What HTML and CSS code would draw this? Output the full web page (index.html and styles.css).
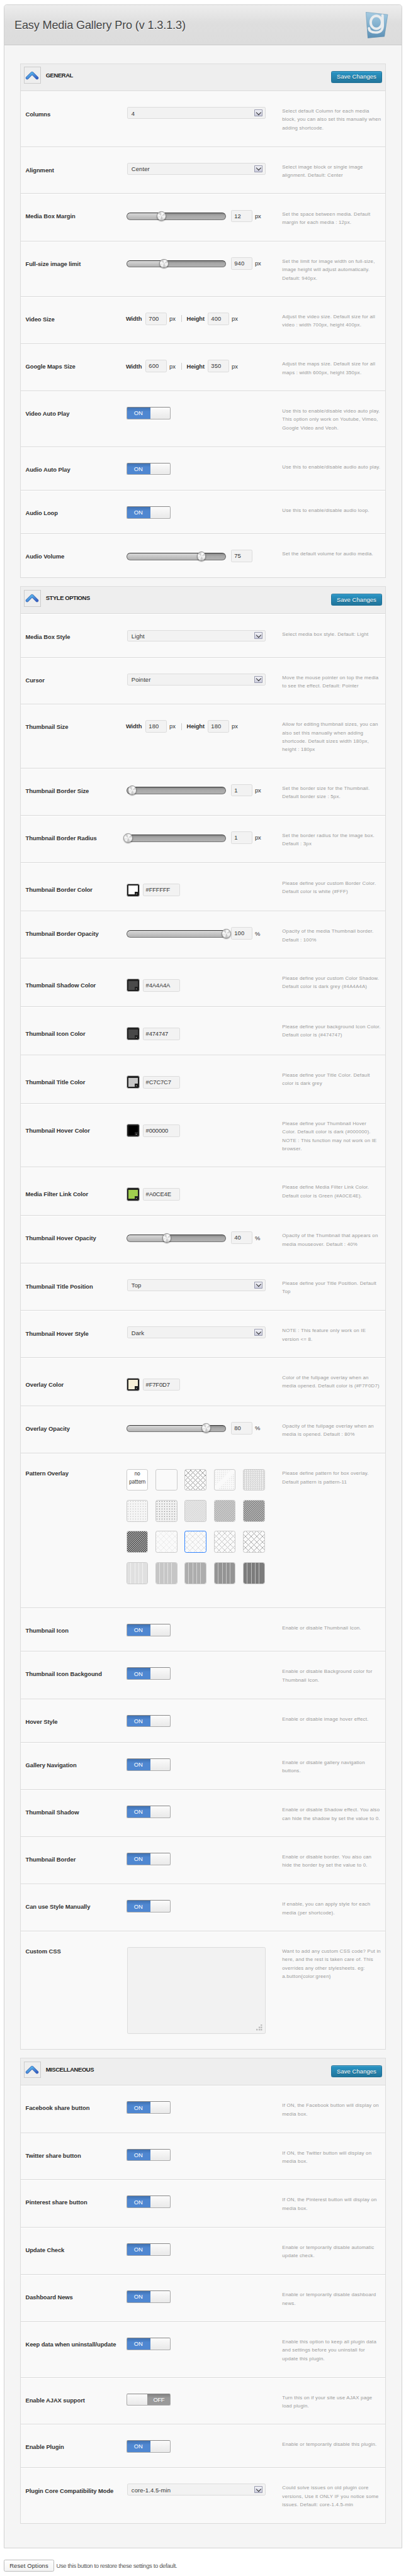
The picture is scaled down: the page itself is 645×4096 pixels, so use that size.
FILE: index.html
```html
<!DOCTYPE html>
<html lang="en">
<head>
<meta charset="utf-8">
<title>Easy Media Gallery Pro</title>
<link rel="stylesheet" href="styles.css">
</head>
<body>
<svg class="defs" aria-hidden="true">
  <defs>
    <linearGradient id="chev" x1="0" y1="0" x2="1" y2="1"><stop offset="0" stop-color="#5fc4f3"/><stop offset="1" stop-color="#3560c4"/></linearGradient>
    <linearGradient id="plate" x1="0" y1="0" x2="0" y2="1"><stop offset="0" stop-color="#a6cbe2"/><stop offset=".45" stop-color="#86b3d0"/><stop offset="1" stop-color="#5b8fb5"/></linearGradient>
    <symbol id="chevron" viewBox="0 0 28 18"><path d="M4 14 L14 4 L24 14" fill="none" stroke="#3a5fae" stroke-width="6" stroke-linecap="round" stroke-linejoin="round"/><path d="M4 14 L14 4 L24 14" fill="none" stroke="url(#chev)" stroke-width="4.4" stroke-linecap="round" stroke-linejoin="round"/></symbol>
  </defs>
</svg>
<div class="page">
  <main class="panel">
    <header class="masthead">
      <h1>Easy Media Gallery Pro (v 1.3.1.3)</h1>
      <svg class="logo" viewBox="0 0 45 53"><path d="M0 0 L45 5 L38 50 L4 53 Z" fill="url(#plate)"/><path d="M.5 .5 L44.5 5.300 L37.600 49.600 L4.500 52.500 Z" fill="none" stroke="#6e93ab" stroke-opacity=".55"/><ellipse cx="21.500" cy="21" rx="11.500" ry="13" fill="none" stroke="#e9ecee" stroke-width="5"/><path d="M34 7 L34.500 27 C34.500 38 29 41.500 20 41.500 C11 41.500 7 38 6.500 33" fill="none" stroke="#e9ecee" stroke-width="5" stroke-linecap="round"/></svg>
    </header>
    <div class="sections">

    <section class="group">
      <header class="bar"><span class="fold"><svg><use href="#chevron"/></svg></span><h2>GENERAL</h2><button class="save">Save Changes</button></header>
      <div class="row h113 sel"><h3>Columns</h3><div class="ctl"><span class="select">4<i></i></span></div><p>Select default Column for each media<br>block, you can also set this manually when<br>adding shortcode.</p></div>
      <div class="row h95 sel"><h3>Alignment</h3><div class="ctl"><span class="select">Center<i></i></span></div><p>Select image block or single image<br>alignment. Default: Center</p></div>
      <div class="row h96"><h3>Media Box Margin</h3><div class="ctl"><span class="slider" style="--v:70px"><b></b></span><span class="num">12</span><span class="unit">px</span></div><p>Set the space between media. Default<br>margin for each media : 12px.</p></div>
      <div class="row h112"><h3>Full-size image limit</h3><div class="ctl"><span class="slider" style="--v:75px"><b></b></span><span class="num">940</span><span class="unit">px</span></div><p>Set the limit for image width on full-size,<br>image height will adjust automatically.<br>Default: 940px.</p></div>
      <div class="row h96"><h3>Video Size</h3><div class="ctl size"><strong>Width</strong><span class="num">700</span><span class="unit">px</span><em></em><strong>Height</strong><span class="num">400</span><span class="unit">px</span></div><p>Adjust the video size. Default size for all<br>video : width 700px, height 400px.</p></div>
      <div class="row h95"><h3>Google Maps Size</h3><div class="ctl size"><strong>Width</strong><span class="num">600</span><span class="unit">px</span><em></em><strong>Height</strong><span class="num">350</span><span class="unit">px</span></div><p>Adjust the maps size. Default size for all<br>maps : width 600px, height 350px.</p></div>
      <div class="row h113"><h3>Video Auto Play</h3><div class="ctl"><span class="switch">ON</span></div><p>Use this to enable/disable video auto play.<br>This option only work on Youtube, Vimeo,<br>Google Video and Veoh.</p></div>
      <div class="row h88"><h3>Audio Auto Play</h3><div class="ctl"><span class="switch">ON</span></div><p>Use this to enable/disable audio auto play.</p></div>
      <div class="row h88"><h3>Audio Loop</h3><div class="ctl"><span class="switch">ON</span></div><p>Use this to enable/disable audio loop.</p></div>
      <div class="row h89"><h3>Audio Volume</h3><div class="ctl"><span class="slider" style="--v:151px"><b></b></span><span class="num">75</span></div><p>Set the default volume for audio media.</p></div>
    </section>

    <section class="group">
      <header class="bar"><span class="fold"><svg><use href="#chevron"/></svg></span><h2>STYLE OPTIONS</h2><button class="save">Save Changes</button></header>
      <div class="row h88 sel"><h3>Media Box Style</h3><div class="ctl"><span class="select">Light<i></i></span></div><p>Select media box style. Default: Light</p></div>
      <div class="row h95 sel"><h3>Cursor</h3><div class="ctl"><span class="select">Pointer<i></i></span></div><p>Move the mouse pointer on top the media<br>to see the effect. Default: Pointer</p></div>
      <div class="row h129"><h3>Thumbnail Size</h3><div class="ctl size"><strong>Width</strong><span class="num">180</span><span class="unit">px</span><em></em><strong>Height</strong><span class="num">180</span><span class="unit">px</span></div><p>Allow for editing thumbnail sizes, you can<br>also set this manually when adding<br>shortcode. Default sizes width 180px,<br>height : 180px</p></div>
      <div class="row h96"><h3>Thumbnail Border Size</h3><div class="ctl"><span class="slider" style="--v:11px"><b></b></span><span class="num">1</span><span class="unit">px</span></div><p>Set the border size for the Thumbnail.<br>Default border size : 5px.</p></div>
      <div class="row h96"><h3>Thumbnail Border Radius</h3><div class="ctl"><span class="slider" style="--v:3px"><b></b></span><span class="num">1</span><span class="unit">px</span></div><p>Set the border radius for the image box.<br>Default : 3px</p></div>
      <div class="row h98 col"><h3>Thumbnail Border Color</h3><div class="ctl"><span class="swatch" style="--c:#fff"></span><span class="hex">#FFFFFF</span></div><p>Please define your custom Border Color.<br>Default color is white (#FFF)</p></div>
      <div class="row h95"><h3>Thumbnail Border Opacity</h3><div class="ctl"><span class="slider" style="--v:201px"><b></b></span><span class="num">100</span><span class="unit">%</span></div><p>Opacity of the media Thumbnail border.<br>Default : 100%</p></div>
      <div class="row h98 col"><h3>Thumbnail Shadow Color</h3><div class="ctl"><span class="swatch" style="--c:#4a4a4a"></span><span class="hex">#4A4A4A</span></div><p>Please define your custom Color Shadow.<br>Default color is dark grey (#4A4A4A)</p></div>
      <div class="row h98 col"><h3>Thumbnail Icon Color</h3><div class="ctl"><span class="swatch" style="--c:#474747"></span><span class="hex">#474747</span></div><p>Please define your background Icon Color.<br>Default color is (#474747)</p></div>
      <div class="row h98 col"><h3>Thumbnail Title Color</h3><div class="ctl"><span class="swatch" style="--c:#c7c7c7"></span><span class="hex">#C7C7C7</span></div><p>Please define your Title Color. Default<br>color is dark grey</p></div>
      <div class="row h129 col"><h3>Thumbnail Hover Color</h3><div class="ctl"><span class="swatch" style="--c:#000"></span><span class="hex">#000000</span></div><p>Please define your Thumbnail Hover<br>Color. Default color is dark (#000000).<br>NOTE : This function may not work on IE<br>browser.</p></div>
      <div class="row h98 col"><h3>Media Filter Link Color</h3><div class="ctl"><span class="swatch" style="--c:#a0ce4e"></span><span class="hex">#A0CE4E</span></div><p>Please define Media Filter Link Color.<br>Default color is Green (#A0CE4E).</p></div>
      <div class="row h96"><h3>Thumbnail Hover Opacity</h3><div class="ctl"><span class="slider" style="--v:81px"><b></b></span><span class="num">40</span><span class="unit">%</span></div><p>Opacity of the Thumbnail that appears on<br>media mouseover. Default : 40%</p></div>
      <div class="row h96 sel"><h3>Thumbnail Title Position</h3><div class="ctl"><span class="select">Top<i></i></span></div><p>Please define your Title Position. Default<br>Top</p></div>
      <div class="row h95 sel"><h3>Thumbnail Hover Style</h3><div class="ctl"><span class="select">Dark<i></i></span></div><p>NOTE : This feature only work on IE<br>version &lt;= 8.</p></div>
      <div class="row h98 col"><h3>Overlay Color</h3><div class="ctl"><span class="swatch" style="--c:#f7f0d7"></span><span class="hex">#F7F0D7</span></div><p>Color of the fullpage overlay when an<br>media opened. Default color is (#F7F0D7)</p></div>
      <div class="row h96"><h3>Overlay Opacity</h3><div class="ctl"><span class="slider" style="--v:161px"><b></b></span><span class="num">80</span><span class="unit">%</span></div><p>Opacity of the fullpage overlay when an<br>media is opened. Default : 80%</p></div>
      <div class="row h313 top"><h3>Pattern Overlay</h3><div class="ctl"><div class="tiles">
        <span class="tile none">no<br>pattern</span><span class="tile"></span><span class="tile net" style="--ink:#a0a0a0"></span><span class="tile fade"></span><span class="tile weave"></span>
        <span class="tile dots" style="--ink:#bbb;--bg:#f5f5f5"></span><span class="tile dots" style="--ink:#777;--bg:#f0f0f0"></span><span class="tile hatch" style="--ink:#cfcfcf;--bg:#e9e9e9"></span><span class="tile hatch" style="--ink:#989898;--bg:#d3d3d3"></span><span class="tile hatch" style="--ink:#505050;--bg:#c4c4c4"></span>
        <span class="tile hatch" style="--ink:#000;--bg:#bdbdbd"></span><span class="tile net wide" style="--ink:#ebebeb"></span><span class="tile net wide on" style="--ink:#dedede"></span><span class="tile net wide" style="--ink:#c5c5c5"></span><span class="tile net wide" style="--ink:#adadad"></span>
        <span class="tile bars" style="--ink:#e0e0e0;--bg:#f2f2f2"></span><span class="tile bars" style="--ink:#c6c6c6;--bg:#e4e4e4"></span><span class="tile bars" style="--ink:#adadad;--bg:#d5d5d5"></span><span class="tile bars" style="--ink:#949494;--bg:#c8c8c8"></span><span class="tile bars" style="--ink:#7c7c7c;--bg:#c0c0c0"></span>
      </div></div><p>Please define pattern for box overlay.<br>Default pattern is pattern-11</p></div>
      <div class="row h88"><h3>Thumbnail Icon</h3><div class="ctl"><span class="switch">ON</span></div><p>Enable or disable Thumbnail Icon.</p></div>
      <div class="row h96"><h3>Thumbnail Icon Backgound</h3><div class="ctl"><span class="switch">ON</span></div><p>Enable or disable Background color for<br>Thumbnail Icon.</p></div>
      <div class="row h88"><h3>Hover Style</h3><div class="ctl"><span class="switch">ON</span></div><p>Enable or disable image hover effect.</p></div>
      <div class="row h96"><h3>Gallery Navigation</h3><div class="ctl"><span class="switch">ON</span></div><p>Enable or disable gallery navigation<br>buttons.</p></div>
      <div class="row h95"><h3>Thumbnail Shadow</h3><div class="ctl"><span class="switch">ON</span></div><p>Enable or disable Shadow effect. You also<br>can hide the shadow by set the value to 0.</p></div>
      <div class="row h96"><h3>Thumbnail Border</h3><div class="ctl"><span class="switch">ON</span></div><p>Enable or disable border. You also can<br>hide the border by set the value to 0.</p></div>
      <div class="row h95"><h3>Can use Style Manually</h3><div class="ctl"><span class="switch">ON</span></div><p>If enable, you can apply style for each<br>media (per shortcode).</p></div>
      <div class="row h239 top"><h3>Custom CSS</h3><div class="ctl"><span class="area"><svg viewBox="0 0 12 12"><path d="M9 0h3v3h-3zM5 4.500h3v3h-3zM9 4.500h3v3h-3zM0 9h3v3h-3zM5 9h3v3h-3zM9 9h3v3h-3z" fill="#bdbdbd"/></svg></span></div><p>Want to add any custom CSS code? Put in<br>here, and the rest is taken care of. This<br>overrides any other stylesheets. eg:<br>a.button{color:green}</p></div>
    </section>

    <section class="group">
      <header class="bar"><span class="fold"><svg><use href="#chevron"/></svg></span><h2>MISCELLANEOUS</h2><button class="save">Save Changes</button></header>
      <div class="row h96"><h3>Facebook share button</h3><div class="ctl"><span class="switch">ON</span></div><p>If ON, the Facebook button will display on<br>media box.</p></div>
      <div class="row h95"><h3>Twitter share button</h3><div class="ctl"><span class="switch">ON</span></div><p>If ON, the Twitter button will display on<br>media box.</p></div>
      <div class="row h96"><h3>Pinterest share button</h3><div class="ctl"><span class="switch">ON</span></div><p>If ON, the Pinterest button will display on<br>media box.</p></div>
      <div class="row h96"><h3>Update Check</h3><div class="ctl"><span class="switch">ON</span></div><p>Enable or temporarily disable automatic<br>update check.</p></div>
      <div class="row h95"><h3>Dashboard News</h3><div class="ctl"><span class="switch">ON</span></div><p>Enable or temporarily disable dashboard<br>news.</p></div>
      <div class="row h113"><h3>Keep data when uninstall/update</h3><div class="ctl"><span class="switch">ON</span></div><p>Enable this option to keep all plugin data<br>and settings before you uninstall for<br>update this plugin.</p></div>
      <div class="row h95"><h3>Enable AJAX support</h3><div class="ctl"><span class="switch off">OFF</span></div><p>Turn this on if your site use AJAX page<br>load plugin.</p></div>
      <div class="row h88"><h3>Enable Plugin</h3><div class="ctl"><span class="switch">ON</span></div><p>Enable or temporarily disable this plugin.</p></div>
      <div class="row h113 sel"><h3>Plugin Core Compatibility Mode</h3><div class="ctl"><span class="select">core-1.4.5-min<i></i></span></div><p>Could solve issues on old plugin core<br>versions, Use it ONLY IF you notice some<br>issues. Default: core-1.4.5-min</p></div>
    </section>
    </div>
  </main>
  <footer class="reset"><button>Reset Options</button><span>Use this button to restore these settings to default.</span></footer>
</div>
</body>
</html>
```
FILE: styles.css
```css
* { box-sizing: border-box; }
body { margin: 0; background: #fff; overflow: hidden; }
h1, h2, h3, p { margin: 0; }
button { font: inherit; padding: 0; }
.defs { position: absolute; width: 0; height: 0; }

.page {
  zoom: 0.7857;
  width: 820px;
  height: 5213px;
  padding: 9px 7px 0 8px;
  font: 12px/17px "Liberation Sans", Arial, sans-serif;
  color: #333;
  white-space: nowrap;
}

.panel {
  height: 5148px;
  border: 1px solid #d2d2d2;
  border-radius: 6px 6px 0 0;
  background: #f5f5f5;
}
.masthead {
  display: flex;
  align-items: center;
  justify-content: space-between;
  height: 82px;
  padding: 0 27px 0 20px;
  border-bottom: 2px solid #cbcbcb;
  border-radius: 5px 5px 0 0;
  background: linear-gradient(#ededed, #dedede 45%, #dcdcdc);
}
.masthead h1 {
  padding-top: 2px;
  font-size: 23px;
  font-weight: 400;
  line-height: 30px;
  letter-spacing: -0.16px;
  color: #444;
  text-shadow: 0 1px 0 #fff;
}
.logo { width: 45px; height: 53px; }

.sections {
  display: flex;
  flex-direction: column;
  gap: 17px;
  padding: 36px 31px 0 32px;
}
.group { border: 1px solid #ddd; border-bottom: 0; }

.bar {
  display: flex;
  align-items: flex-start;
  height: 55px;
  padding: 6px 7px 0 6px;
  border-bottom: 1px solid #dadada;
  background: #eee;
}
.fold {
  display: grid;
  place-items: center;
  width: 34px;
  height: 34px;
  border: 1px solid #ccc;
}
.fold svg { width: 28px; height: 18px; }
.bar h2 { flex: 1; padding: 8px 0 0 10px; font-size: 12px; letter-spacing: -0.5px; color: #222; }
.save {
  width: 103px;
  height: 24px;
  margin-top: 8px;
  border: 1px solid #1f7198;
  border-radius: 3px;
  background: linear-gradient(#2a95c5, #21759b);
  box-shadow: inset 0 1px 0 #50abd3;
  color: #fff;
  letter-spacing: 0.12px;
  text-shadow: 0 1px 0 rgba(0, 0, 0, .3);
}

.row {
  display: grid;
  grid-template-columns: 204px 315px 1fr;
  align-items: start;
  padding: 32px 0 0 9px;
  border-bottom: 1px solid #dadada;
  background: #f9f9f9;
  box-shadow: inset 0 1px 0 #fff;
}
.h88 { height: 88px; }
.h89 { height: 89px; }
.h95 { height: 95px; }
.h96 { height: 96px; }
.h98 { height: 98px; }
.h112 { height: 112px; }
.h113 { height: 113px; }
.h129 { height: 129px; }
.h239 { height: 239px; }
.h313 { height: 313px; }

.row h3 { padding-top: 5px; font-size: 12px; line-height: 17px; letter-spacing: -0.1px; color: #333; }
.row.sel h3 { padding-top: 6px; }
.row.col h3 { padding-top: 14px; }
.row.top h3 { padding-top: 0; }
.row p { font-size: 10px; line-height: 17px; letter-spacing: 0.27px; color: #999; }
.ctl { display: flex; align-items: center; height: 25px; }
.row.col .ctl { height: 35px; align-items: flex-end; }
.row.top .ctl { height: auto; }

.select {
  display: flex;
  justify-content: space-between;
  align-items: center;
  width: 280px;
  height: 24px;
  margin: 0 0 1px 1px;
  padding: 2px 4px 0 8px;
  border: 1px solid #dcdcdc;
  border-radius: 3px;
  background: #f2f2f2;
  letter-spacing: 0.15px;
}
.select i {
  display: grid;
  place-items: center;
  width: 17px;
  height: 14px;
  margin-top: -2px;
  border: 1px solid #9a9cb0;
  border-radius: 1px;
  background: linear-gradient(#f4f4f8, #c9cadb);
}
.select i::before {
  content: "";
  width: 6px;
  height: 6px;
  margin-top: -3px;
  border: solid #333;
  border-width: 0 2px 2px 0;
  transform: rotate(45deg);
}

.slider {
  position: relative;
  width: 202px;
  height: 15px;
  margin-top: 2px;
  margin-right: 10px;
  border: 1px solid #555;
  border-color: #333 #666 #777;
  border-radius: 8px;
  background:
    linear-gradient(#d8d8d8, #b2b2b2) 0 0 / var(--v) 100% no-repeat,
    linear-gradient(#888, #a8a8a8 40%, #b0b0b0);
}
.slider b {
  position: absolute;
  top: -4px;
  left: calc(var(--v) - 10px);
  width: 19px;
  height: 19px;
  border: 1px solid #8b8b8b;
  border-radius: 50%;
  background: conic-gradient(#eee, #fff 8%, #ccc 16%, #f4f4f4 26%, #eee 35%, #c2c2c2 50%, #f6f6f6 60%, #e4e4e4 70%, #fdfdfd 80%, #c6c6c6 92%, #eee);
  box-shadow: 0 1px 2px rgba(0, 0, 0, .5);
}

.num, .hex {
  height: 25px;
  padding-left: 5px;
  border: 1px solid #dcdcdc;
  border-radius: 3px;
  background: #f2f2f2;
  line-height: 23px;
  letter-spacing: 0.14px;
}
.num { width: 43px; }
.hex { width: 75px; letter-spacing: -0.2px; }
.unit { padding-left: 5px; letter-spacing: -0.2px; }
.size strong { width: 40px; margin-left: -1px; letter-spacing: -0.2px; }
.size em { width: 1px; height: 14px; margin: 0 10px 0 11px; background: #ccc; }
.size em + strong { width: 43px; margin-left: 0; }
.size .unit { width: 18px; }

.switch {
  display: flex;
  align-items: center;
  width: 90px;
  height: 25px;
  padding-left: 14px;
  border: 1px solid #aaa;
  border-top-color: #888;
  border-radius: 3px;
  background:
    linear-gradient(#fbfbfb, #f0f0f0 60%, #e9e9e9) 48px 0 / 41px 100% no-repeat,
    linear-gradient(#4172b1, #4f87d1 35%, #4f87d1);
  color: #fff;
  box-shadow: 0 1px 0 #fff;
}
.switch.off {
  padding-left: 53px;
  background:
    linear-gradient(#fbfbfb, #f0f0f0 60%, #e9e9e9) 0 0 / 41px 100% no-repeat,
    linear-gradient(#828282, #9a9a9a 35%, #9a9a9a);
  letter-spacing: -0.4px;
}

.swatch {
  position: relative;
  width: 27px;
  height: 27px;
  margin: 0 6px -1px 0;
  border: 2px solid #b9b9b9;
  border-radius: 4px;
  background: #222;
}
.swatch::before {
  content: "";
  position: absolute;
  inset: 3px;
  background: var(--c);
}
.swatch::after {
  content: "";
  position: absolute;
  right: 2px;
  bottom: 2px;
  width: 7px;
  height: 7px;
  background: conic-gradient(from 135deg at 50% 25%, #eee 90deg, transparent 0) 50% 60% / 4px 3px no-repeat #222;
}

.tiles {
  display: grid;
  grid-template-columns: repeat(5, 44px);
  gap: 19px 15px;
  margin-top: -1px;
}
.tile {
  height: 44px;
  border: 2px solid #cbcbcb;
  border-radius: 4px;
  background-color: #fafafa;
  background-clip: padding-box;
}
.tile.none { font: 11px/17px "DejaVu Sans Condensed", "Open Sans", sans-serif; text-align: center; letter-spacing: -0.4px; background: #fff; }
.tile.on { border-color: #3385ff; }
.net {
  --p: 7.07px;
  background-image:
    repeating-linear-gradient(45deg, var(--ink) 0 .9px, transparent .9px var(--p)),
    repeating-linear-gradient(-45deg, var(--ink) 0 .9px, transparent .9px var(--p));
}
.net.wide { --p: 8.2px; }
.fade {
  background-image:
    linear-gradient(135deg, rgba(250, 250, 250, 0) 38%, #fafafa 44% 54%, rgba(250, 250, 250, 0) 60%),
    radial-gradient(circle, #e4e4e4 .7px, rgba(250, 250, 250, 0) 1px);
  background-size: 100% 100%, 4px 4px;
}
.weave {
  background-image: repeating-conic-gradient(#d0d0d0 0 25%, #f6f6f6 0 50%);
  background-size: 3.82px 3.82px;
}
.dots {
  background-color: var(--bg);
  background-image: radial-gradient(circle at 1.5px 1.5px, var(--ink) .7px, transparent 1px);
  background-size: 5.09px 5.09px;
}
.hatch { background-image: repeating-linear-gradient(135deg, var(--ink) 0 1.3px, var(--bg) 1.3px 2.7px); }
.bars { background-image: repeating-linear-gradient(90deg, var(--ink) 0 7px, var(--bg) 7px 8px); }

.area {
  display: flex;
  align-items: flex-end;
  justify-content: flex-end;
  width: 280px;
  height: 175px;
  margin-left: 1px;
  padding: 5px;
  border: 1px solid #dcdcdc;
  border-radius: 3px;
  background: #f2f2f2;
}
.area svg { width: 12px; height: 12px; }

.reset { display: flex; align-items: center; padding-top: 23px; color: #555; }
.reset button {
  width: 101px;
  height: 24px;
  margin-right: 5px;
  border: 1px solid #bbb;
  border-radius: 3px;
  background: linear-gradient(#fefefe, #f4f4f4);
  color: #333;
  letter-spacing: 0.2px;
}
.reset span { letter-spacing: -0.43px; }
```
